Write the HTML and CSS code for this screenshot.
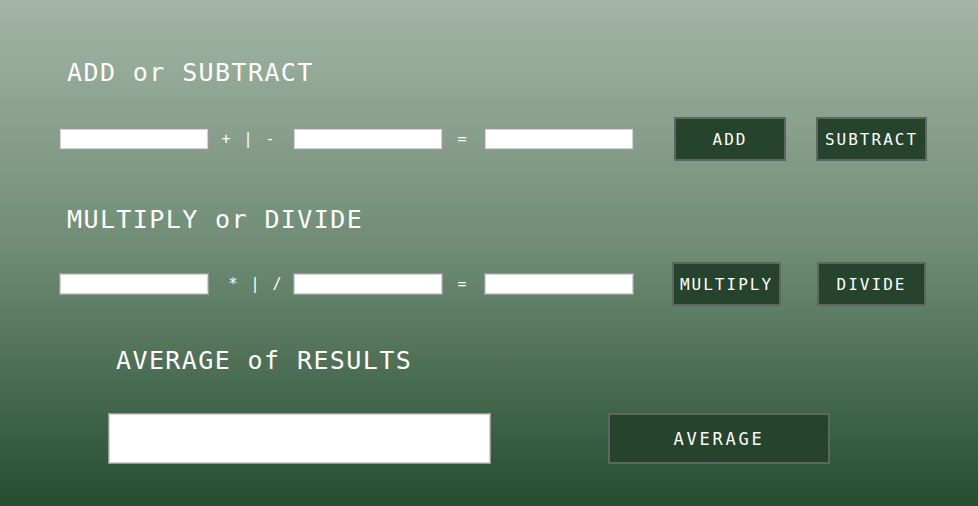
FILE: index.html
```html
<!DOCTYPE html>
<html>
<head>
<meta charset="utf-8">
<link rel="stylesheet" href="styles.css">
</head>
<body>
<main class="page">
  <h2 class="title t1">ADD or SUBTRACT</h2>
  <div class="row r1">
    <input class="box" type="text">
    <span class="op">+ | -</span>
    <input class="box" type="text">
    <span class="eq">=</span>
    <input class="box" type="text">
    <button class="btn b-add">ADD</button>
    <button class="btn b-sub">SUBTRACT</button>
  </div>
  <h2 class="title t2">MULTIPLY or DIVIDE</h2>
  <div class="row r2">
    <input class="box" type="text">
    <span class="op op2">* | /</span>
    <input class="box" type="text">
    <span class="eq">=</span>
    <input class="box" type="text">
    <button class="btn b-mul">MULTIPLY</button>
    <button class="btn b-div">DIVIDE</button>
  </div>
  <h2 class="title t3">AVERAGE of RESULTS</h2>
  <div class="row r3">
    <input class="box big" type="text">
    <button class="btn b-avg">AVERAGE</button>
  </div>
</main>
</body>
</html>
```
FILE: styles.css
```css
html, body {
  margin: 0;
  padding: 0;
}
body {
  width: 978px;
  height: 506px;
  overflow: hidden;
  background: linear-gradient(to bottom, #a3b5a6 0%, #6e8b74 50%, #264d30 100%);
  font-family: "DejaVu Sans Mono", "Liberation Mono", monospace;
  color: #fff;
}
.page {
  padding: 58px 0 0 59px;
  display: flex;
  flex-direction: column;
  align-items: flex-start;
}
.title {
  margin: 0;
  font-weight: normal;
  font-size: 25px;
  line-height: 30px;
  letter-spacing: 1.4px;
  padding-left: 8px;
}
.t2 { margin-top: 44px; }
.t3 { margin-top: 40px; padding-left: 57px; }
.row {
  display: flex;
  align-items: center;
}
.r1 { margin-top: 29px; }
.r2 { margin-top: 27px; }
.r3 { margin-top: 37px; padding-left: 49px; }
.box {
  box-sizing: border-box;
  width: 150px;
  height: 22px;
  margin: 0;
  padding: 0 4px;
  background: #fff;
  border: 1px solid #9a9a9a;
  box-shadow: inset 0 0 0 1px #d2d2d2;
  outline: none;
}
.box.big {
  width: 383px;
  height: 51px;
}
.op {
  width: 84px;
  text-align: center;
  font-size: 15px;
  letter-spacing: 2px;
  padding-right: 4px;
  box-sizing: border-box;
}
.op2 {
  padding-right: 0;
  padding-left: 10px;
}
.eq {
  width: 41px;
  text-align: center;
  font-size: 15px;
  padding-right: 3px;
  box-sizing: border-box;
}
.btn {
  box-sizing: border-box;
  margin: 0;
  padding: 0;
  height: 44px;
  background: #26432e;
  border: 2px solid #5e665f;
  color: #fff;
  font-family: "DejaVu Sans Mono", "Liberation Mono", monospace;
  font-size: 16px;
  letter-spacing: 2px;
  text-align: center;
}
.b-add { width: 112px; margin-left: 40px; }
.b-sub { width: 111px; margin-left: 30px; }
.b-mul { width: 109px; margin-left: 38px; }
.b-div { width: 109px; margin-left: 36px; }
.b-avg {
  width: 222px;
  height: 51px;
  margin-left: 117px;
  font-size: 17px;
  letter-spacing: 2.8px;
}
```
